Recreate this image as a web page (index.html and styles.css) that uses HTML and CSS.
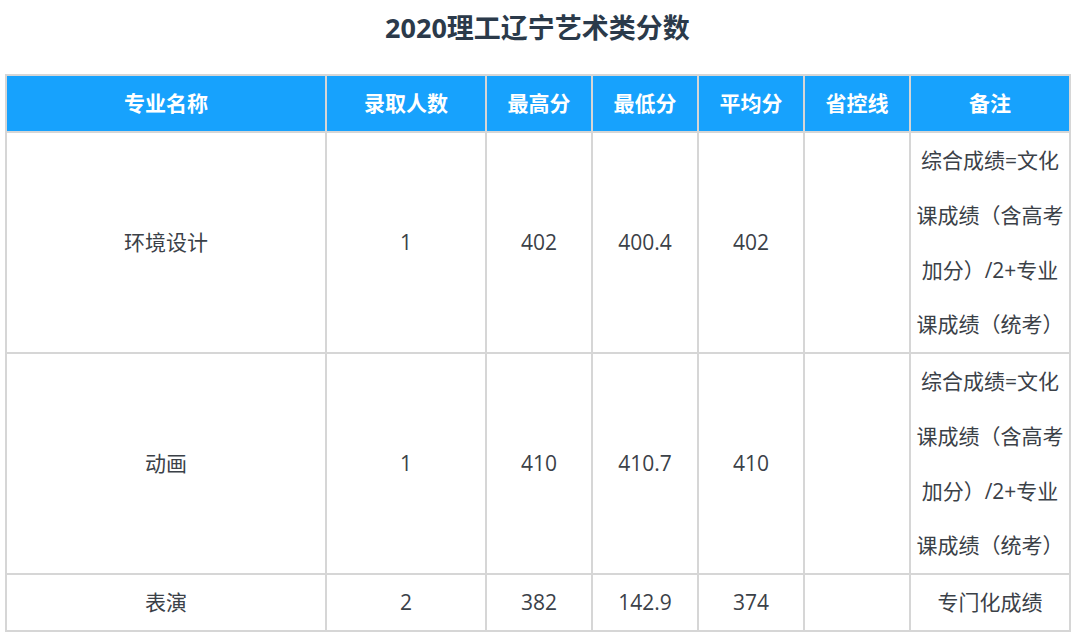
FILE: index.html
```html
<!DOCTYPE html>
<html lang="zh">
<head>
<meta charset="utf-8">
<link rel="stylesheet" href="styles.css">
</head>
<body>
<div class="page">
  <h1 class="title">2020理工辽宁艺术类分数</h1>
  <table class="score">
    <colgroup>
      <col class="c-name"><col class="c-num"><col class="c-s"><col class="c-s"><col class="c-s"><col class="c-s"><col class="c-note">
    </colgroup>
    <thead>
      <tr><th>专业名称</th><th>录取人数</th><th>最高分</th><th>最低分</th><th>平均分</th><th>省控线</th><th>备注</th></tr>
    </thead>
    <tbody>
      <tr><td>环境设计</td><td>1</td><td>402</td><td>400.4</td><td>402</td><td></td><td class="note">综合成绩=文化课成绩（含高考加分）/2+专业课成绩（统考）</td></tr>
      <tr><td>动画</td><td>1</td><td>410</td><td>410.7</td><td>410</td><td></td><td class="note">综合成绩=文化课成绩（含高考加分）/2+专业课成绩（统考）</td></tr>
      <tr><td>表演</td><td>2</td><td>382</td><td>142.9</td><td>374</td><td></td><td class="note">专门化成绩</td></tr>
    </tbody>
  </table>
</div>
</body>
</html>
```
FILE: styles.css
```css
html, body {
  margin: 0;
  padding: 0;
  background: #ffffff;
}
body {
  font-family: "Open Sans", "Noto Sans CJK SC", sans-serif;
  color: #3b4148;
}
.page {
  padding: 8px 10px 0 5px;
}
.title {
  margin: 0 0 26px 0;
  height: 40px;
  line-height: 40px;
  text-align: center;
  font-size: 27px;
  font-weight: 700;
  color: #2b3a4a;
}
.score {
  width: 1065px;
  border-collapse: collapse;
  table-layout: fixed;
  font-size: 21px;
}
.c-name { width: 320px; }
.c-num { width: 160px; }
.c-s { width: 106px; }
.c-note { width: 160px; }
.score th, .score td {
  border: 2px solid #d6d6d6;
  text-align: center;
  vertical-align: middle;
  padding: 0 3px;
  line-height: 55px;
}
.score th {
  background: #17a2fd;
  color: #ffffff;
  font-weight: 700;
  height: 53px;
}
.score td {
  font-weight: 400;
  line-height: 55px;
}
.score td.note {
  line-height: 54.75px;
}
```
